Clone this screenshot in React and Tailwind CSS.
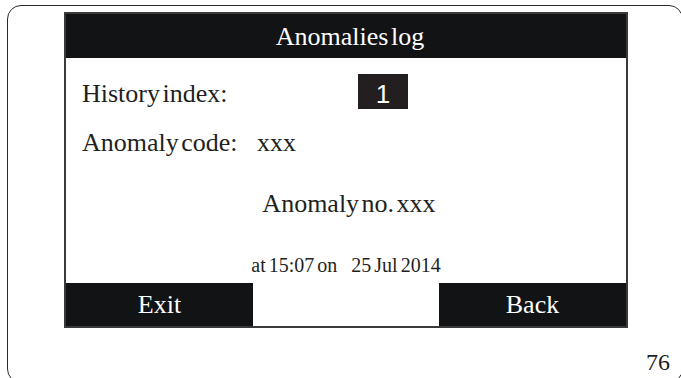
import React from 'react';

const serif = { fontFamily: '"Liberation Serif", "Times New Roman", serif' };

const App = () => {
    return (
        <div className="w-[681px] h-[378px] overflow-hidden bg-white text-[#231f20]" style={serif}>
            <div className="ml-[7px] mt-[5px] w-[676px] h-[378px] rounded-[14px] border border-[#2a2a2a] pl-[56px] pt-[6px]">
                {/* device screen */}
                <div className="w-[564px] h-[316px] border-2 border-[#3a3a3a] flex flex-col [word-spacing:-4px]">
                    <div className="h-[44px] bg-[#111315] text-white text-[26px] leading-[44px] pt-[1px] pl-[8px] text-center">
                        Anomalies log
                    </div>

                    <div className="h-[225px] flex flex-col pl-[16px]">
                        <div className="mt-[16px] flex items-end">
                            <span className="w-[276px] text-[26px] leading-[30px]">History index:</span>
                            <div
                                className="w-[50px] h-[35px] bg-[#231f20] text-white text-[26px] leading-[30px] pt-[5px] text-center"
                                style={{ fontFamily: '"Liberation Sans", Arial, sans-serif' }}
                            >
                                1
                            </div>
                        </div>

                        <div className="mt-[19px] flex text-[26px] leading-[30px]">
                            <span className="w-[175px]">Anomaly code:</span>
                            <span>xxx</span>
                        </div>

                        <div className="mt-[31px] -ml-[16px] pl-[6px] text-center text-[26px] leading-[30px]">
                            Anomaly no. xxx
                        </div>

                        <div className="mt-[34px] -ml-[16px] flex justify-center text-[20px] leading-[24px] [word-spacing:-2px]">
                            <span>at 15:07 on</span>
                            <span className="ml-[14px]">25 Jul 2014</span>
                        </div>
                    </div>

                    <div className="h-[43px] flex text-[26px] leading-[43px]">
                        <div className="w-[187px] bg-[#111315] text-white text-center">Exit</div>
                        <div className="flex-1 bg-white" />
                        <div className="w-[187px] bg-[#111315] text-white text-center">Back</div>
                    </div>
                </div>

                <div className="mt-[22px] ml-[582px] text-[24px] leading-[24px]">76</div>
            </div>
        </div>
    );
};

export default App;
